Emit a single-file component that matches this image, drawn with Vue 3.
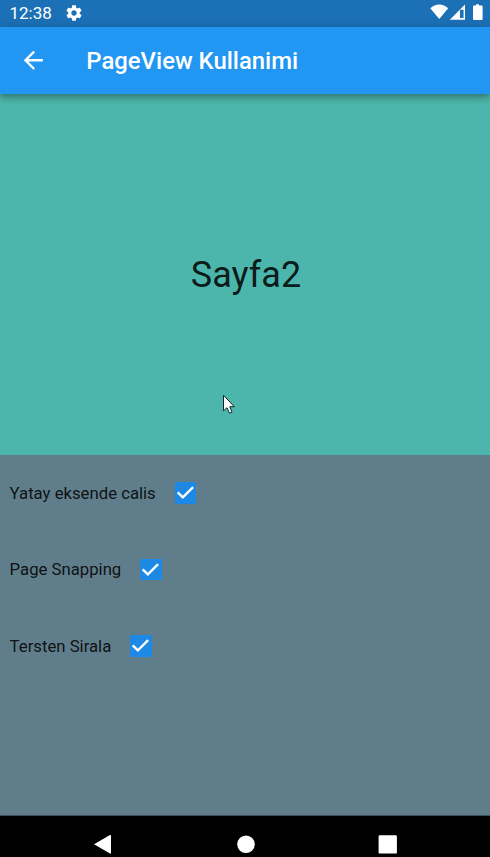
<script setup>
import { ref } from 'vue'

const options = ref([
  { label: 'Yatay eksende calis', checked: true },
  { label: 'Page Snapping', checked: true },
  { label: 'Tersten Sirala', checked: true },
])

function toggle(option) {
  option.checked = !option.checked
}
</script>

<template>
  <div class="screen">
    <header class="status">
      <span class="clock">12:38</span>
      <svg class="gear" viewBox="2 2 20 20">
        <path fill="#fff" d="M19.14 12.94c.04-.3.06-.61.06-.94 0-.32-.02-.64-.07-.94l2.03-1.58c.18-.14.23-.41.12-.61l-1.92-3.32c-.12-.22-.37-.29-.59-.22l-2.39.96c-.5-.38-1.03-.7-1.62-.94l-.36-2.54c-.04-.24-.24-.41-.48-.41h-3.84c-.24 0-.43.17-.47.41l-.36 2.54c-.59.24-1.13.57-1.62.94l-2.39-.96c-.22-.08-.47 0-.59.22L2.74 8.87c-.12.21-.08.47.12.61l2.03 1.58c-.05.3-.09.63-.09.94s.02.64.07.94l-2.03 1.58c-.18.14-.23.41-.12.61l1.92 3.32c.12.22.37.29.59.22l2.39-.96c.5.38 1.03.7 1.62.94l.36 2.54c.05.24.24.41.48.41h3.84c.24 0 .44-.17.47-.41l.36-2.54c.59-.24 1.13-.56 1.62-.94l2.39.96c.22.08.47 0 .59-.22l1.92-3.32c.12-.22.07-.47-.12-.61l-2.01-1.58zM12 15.4c-1.88 0-3.4-1.52-3.4-3.4s1.52-3.4 3.4-3.4 3.4 1.52 3.4 3.4-1.52 3.4-3.4 3.4z" />
      </svg>
      <span class="spacer"></span>
      <svg class="tray" viewBox="0 0 56 20">
        <g fill="#fff">
          <path d="M0.3 8.2C5.2 3.1 13.300 3.100 18.200 8.200L9.250 19.100Z" />
          <path fill-rule="evenodd" d="M35 4.600V19.700H19.800ZM33.600 9.700H30V18H33.600Z" />
          <path d="M46 4.200h3v1.200h2.600a1 1 0 0 1 1 1v12.500a1 1 0 0 1-1 1h-7.600a1 1 0 0 1-1-1V6.400a1 1 0 0 1 1-1H46z" />
        </g>
      </svg>
    </header>

    <div class="appbar">
      <svg class="back" viewBox="0 0 24 24">
        <path fill="#fff" d="M20 11H7.830l5.590-5.590L12 4l-8 8 8 8 1.410-1.410L7.830 13H20v-2z" />
      </svg>
      <h1 class="title">PageView Kullanimi</h1>
    </div>

    <main class="page">
      <span class="page-name">Sayfa2</span>
      <svg class="cursor" viewBox="0 0 14 21">
        <path fill="#fff" stroke="#10252a" stroke-width="1" d="M1.500 1.200V16.800L5 13.700L7.500 19.200L10 18L7.700 12.700H12.300Z" />
      </svg>
    </main>

    <section class="options">
      <div v-for="option in options" :key="option.label" class="option">
        <span class="label">{{ option.label }}</span>
        <span class="box" :class="{ on: option.checked }" role="checkbox" :aria-checked="option.checked" @click="toggle(option)">
          <svg v-if="option.checked" viewBox="0 0 21 21">
            <path fill="none" stroke="#fff" stroke-width="2.300" d="M2.600 10.200L7.700 15.100L17.800 5.100" />
          </svg>
        </span>
      </div>
    </section>

    <nav class="navbar">
      <svg viewBox="0 0 490 41">
        <g fill="#fff">
          <path d="M94 28.300L110 19.100Q111 18.600 111 19.600V37Q111 38 110 37.500Z" />
          <circle cx="246" cy="28.300" r="8.800" />
          <rect x="378.600" y="19.200" width="18.300" height="18.400" rx="1.200" />
        </g>
      </svg>
    </nav>
  </div>
</template>

<style>
body {
  margin: 0;
  overflow: hidden;
}
</style>

<style scoped>
.screen {
  width: 490px;
  height: 857px;
  display: flex;
  flex-direction: column;
  overflow: hidden;
  font-family: Roboto, "Liberation Sans", sans-serif;
}
.status {
  flex: none;
  height: 27px;
  display: flex;
  background: #1b70b6;
  color: #fff;
}
.clock {
  width: 56.200px;
  padding-left: 9.500px;
  line-height: 27px;
  font-size: 17px;
}
.gear {
  width: 16px;
  height: 16px;
  margin-top: 4.500px;
}
.spacer {
  flex: 1;
}
.tray {
  width: 56px;
  height: 20px;
  margin-right: 4px;
}
.appbar {
  position: relative;
  z-index: 1;
  flex: none;
  height: 67px;
  display: flex;
  align-items: center;
  background: #2196f3;
  box-shadow: 0 2px 5px -1px rgba(0, 0, 0, 0.2), 0 5px 6px 0 rgba(0, 0, 0, 0.14), 0 1px 12px 0 rgba(0, 0, 0, 0.12);
}
.back {
  width: 28.600px;
  height: 28.600px;
  margin-left: 19px;
}
.title {
  margin: 0 0 0 38.700px;
  color: #fff;
  font-size: 23.900px;
  font-weight: 500;
  white-space: nowrap;
}
.page {
  position: relative;
  flex: none;
  height: 361px;
  display: flex;
  align-items: center;
  justify-content: center;
  background: #4db6ac;
}
.page-name {
  padding-left: 2px;
  color: rgba(0, 0, 0, 0.87);
  font-size: 36px;
}
.cursor {
  position: absolute;
  left: 222px;
  top: 300px;
  width: 14px;
  height: 21px;
}
.options {
  flex: none;
  height: 360px;
  background: #607d8b;
}
.option {
  height: 76.500px;
  display: flex;
  align-items: center;
  padding-left: 9.600px;
}
.label {
  margin-bottom: 0.600px;
  color: rgba(0, 0, 0, 0.87);
  font-size: 16.730px;
  line-height: 20px;
}
.box {
  width: 21.400px;
  height: 21.400px;
  margin-left: 19.200px;
  margin-bottom: 0.600px;
  border-radius: 1px;
}
.box.on {
  background: #1e88e5;
}
.box svg {
  display: block;
}
.navbar {
  flex: none;
  height: 41px;
  border-top: 1px solid #3d5059;
  background: #000;
}
.navbar svg {
  display: block;
}
</style>
